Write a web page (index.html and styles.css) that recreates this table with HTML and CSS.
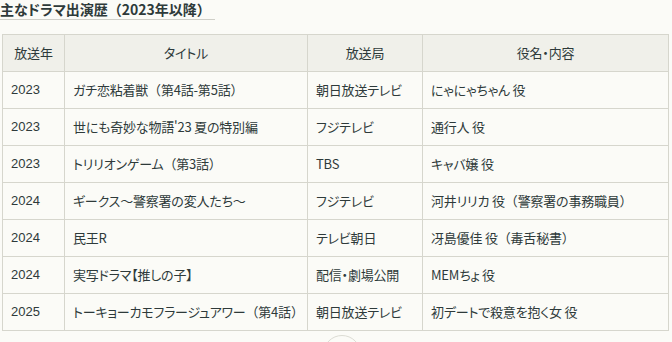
FILE: index.html
```html
<!DOCTYPE html>
<html lang="ja">
<head>
<meta charset="utf-8">
<link rel="stylesheet" href="styles.css">
</head>
<body>
<div class="page">
  <h3 class="heading">主なドラマ出演歴<span class="fw">（</span>2023年以降<span class="fw">）</span></h3>
  <table class="works">
    <colgroup>
      <col class="c-year"><col class="c-title"><col class="c-station"><col class="c-role">
    </colgroup>
    <thead>
      <tr><th>放送年</th><th>タイトル</th><th>放送局</th><th>役名・内容</th></tr>
    </thead>
    <tbody>
      <tr><td>2023</td><td>ガチ恋粘着獣<span class="fw">（</span>第4話-第5話<span class="fw">）</span></td><td>朝日放送テレビ</td><td>にゃにゃちゃん 役</td></tr>
      <tr><td>2023</td><td>世にも奇妙な物語'23 夏の特別編</td><td>フジテレビ</td><td>通行人 役</td></tr>
      <tr><td>2023</td><td>トリリオンゲーム<span class="fw">（</span>第3話<span class="fw">）</span></td><td>TBS</td><td>キャバ嬢 役</td></tr>
      <tr><td>2024</td><td>ギークス〜警察署の変人たち〜</td><td>フジテレビ</td><td>河井リリカ 役<span class="fw">（</span>警察署の事務職員<span class="fw">）</span></td></tr>
      <tr><td>2024</td><td>民王R</td><td>テレビ朝日</td><td>冴島優佳 役<span class="fw">（</span>毒舌秘書<span class="fw">）</span></td></tr>
      <tr><td>2024</td><td>実写ドラマ【推しの子】</td><td>配信・劇場公開</td><td>MEMちょ 役</td></tr>
      <tr><td>2025</td><td>トーキョーカモフラージュアワー<span class="fw">（</span>第4話<span class="fw">）</span></td><td>朝日放送テレビ</td><td>初デートで殺意を抱く女 役</td></tr>
    </tbody>
  </table>
  <div class="more"><span class="circle"></span></div>
</div>
</body>
</html>
```

FILE: styles.css
```css
html, body {
  margin: 0;
  padding: 0;
  background: #fbfbf7;
}
body {
  font-family: "Noto Sans CJK JP", "Liberation Sans", sans-serif;
  color: #2e3a3a;
  overflow: hidden;
}
.page {
  width: 672px;
  height: 342px;
  overflow: hidden;
  display: flex;
  flex-direction: column;
  align-items: flex-start;
}
.heading {
  margin: 0;
  padding: 0 4px 0 0;
  font-size: 14px;
  line-height: 19px;
  font-weight: 700;
  font-feature-settings: "palt";
  border-bottom: 1px solid #cfcfc8;
  height: 21px;
  box-sizing: border-box;
}
.fw {
  font-feature-settings: normal;
}
.works {
  margin: 14px 0 0 2px;
  border-collapse: collapse;
  width: 666px;
  table-layout: fixed;
  font-size: 13px;
  letter-spacing: -0.2px;
  font-feature-settings: "palt";
}
.c-year { width: 62px; }
.c-title { width: 243px; }
.c-station { width: 115px; }
.c-role { width: 246px; }
.works th, .works td {
  border: 1px solid #d6d6cd;
  height: 37px;
  padding: 0 0 0 8px;
  box-sizing: border-box;
  line-height: 18px;
  white-space: nowrap;
  text-align: left;
}
.works td:first-child {
  font-family: "Liberation Sans", sans-serif;
  letter-spacing: 0;
  padding-left: 8px;
}
.works th {
  background: #f0f0ea;
  font-weight: 400;
  text-align: center;
  padding: 0;
}
.more {
  align-self: stretch;
  display: flex;
  justify-content: center;
  margin-top: 4px;
}
.circle {
  width: 36px;
  height: 36px;
  border-radius: 50%;
  border: 1px solid #dcdcd4;
  background: #fbfbf7;
  margin-left: 12px;
}
```
